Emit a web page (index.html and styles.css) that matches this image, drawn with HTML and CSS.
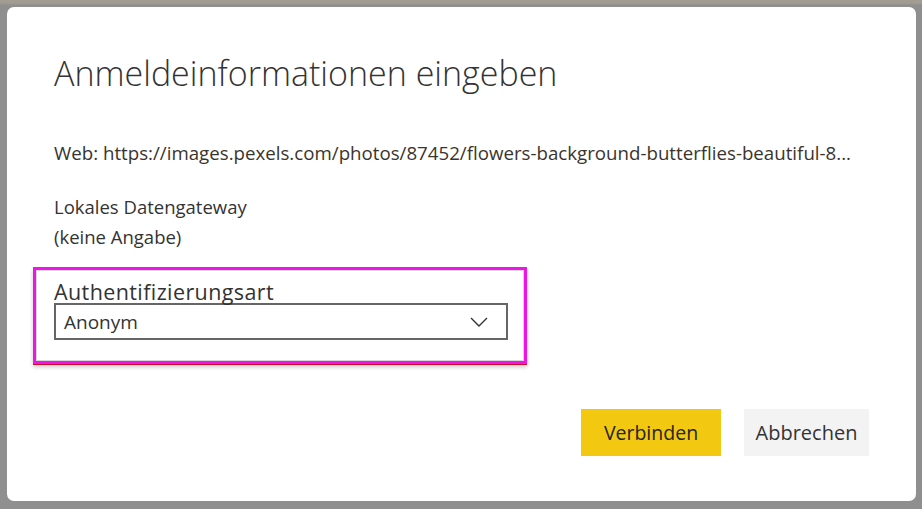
FILE: index.html
```html
<!DOCTYPE html>
<html lang="de">
<head>
<meta charset="utf-8">
<link rel="stylesheet" href="styles.css">
</head>
<body>
<div class="dialog">
  <h1 class="title">Anmeldeinformationen eingeben</h1>
  <p class="source"><span class="kind">Web:</span> <span class="url">https://images.pexels.com/photos/87452/flowers-background-butterflies-beautiful-8...</span></p>
  <div class="gateway">
    <div>Lokales Datengateway</div>
    <div>(keine Angabe)</div>
  </div>
  <div class="highlight">
    <label class="field-label">Authentifizierungsart</label>
    <div class="select">
      <span>Anonym</span>
      <svg class="chev" width="18" height="10" viewBox="0 0 18 10"><path d="M1 1 L9 9 L17 1" fill="none" stroke="#333" stroke-width="1.4"/></svg>
    </div>
  </div>
  <div class="actions">
    <button class="btn primary">Verbinden</button>
    <button class="btn secondary">Abbrechen</button>
  </div>
</div>
</body>
</html>
```
FILE: styles.css
```css
html, body { margin: 0; padding: 0; }
body {
  width: 922px; height: 509px;
  background: linear-gradient(#a19d92 0, #a19d92 3px, #8f8f8f 5px, #8f8f8f 100%);
  font-family: "Open Sans", "Noto Sans", sans-serif;
  color: #333;
  padding: 7px 6px 8px 7px;
  box-sizing: border-box;
}
.dialog {
  background: #fff;
  border-radius: 7px;
  height: 494px;
  box-sizing: border-box;
  padding: 44px 0 0 47px;
  display: flex;
  flex-direction: column;
}
.title {
  margin: 0;
  font-weight: 300;
  font-size: 34px;
  line-height: 44px;
  color: #333;
}
.source {
  margin: 45px 0 0 0;
  font-size: 18.7px;
  line-height: 26px;
  white-space: nowrap;
}
.url { color: #3b342c; }
.gateway {
  margin-top: 26px;
  font-size: 18.5px;
  line-height: 30px;
}
.highlight {
  margin: 15px 0 0 -21px;
  width: 494px;
  height: 97px;
  box-sizing: border-box;
  border: 3px solid #ee15e6;
  box-shadow: inset 0 0 0 1px #d6d6d6, 0 1px 0 #c4102a, 0 3px 4px rgba(0,0,0,0.22);
  padding: 11px 0 0 18px;
}
.field-label {
  display: block;
  font-size: 21.5px;
  letter-spacing: 0.4px;
  line-height: 22px;
  color: #333;
}
.select {
  margin-top: 0;
  width: 454px;
  height: 37px;
  box-sizing: border-box;
  border: 2px solid #666;
  display: flex;
  align-items: center;
  justify-content: space-between;
  padding: 0 18px 0 8px;
  font-size: 19px;
}
.actions {
  display: flex;
  justify-content: flex-end;
  gap: 23px;
  margin-top: 45px;
  padding-right: 47px;
}
.btn {
  font-family: inherit;
  font-size: 20px;
  height: 47px;
  border: none;
  color: #252423;
  padding: 0;
}
.primary { background: #f2c811; width: 140px; font-size: 19.5px; }
.secondary { background: #f3f3f3; width: 125px; color: #333; }
```
